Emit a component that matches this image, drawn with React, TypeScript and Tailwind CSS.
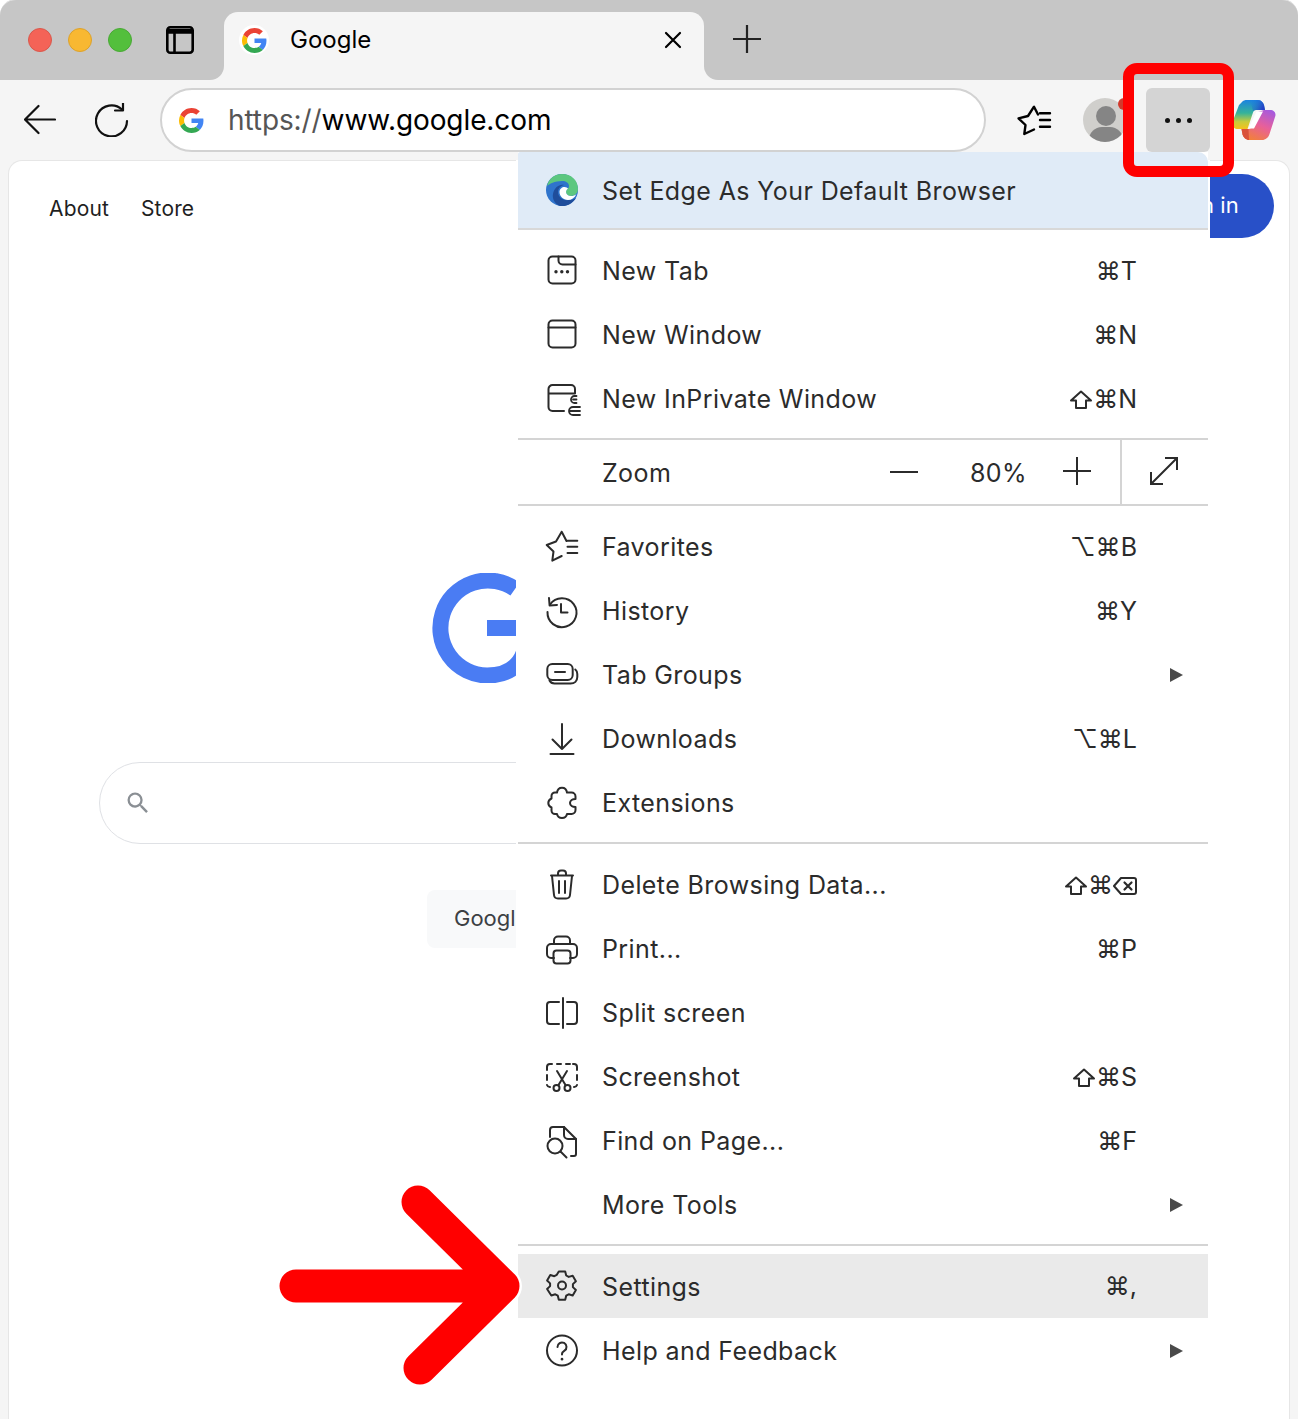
import React from "react";

const GoogleG = ({ className }: { className?: string }) => (
  <svg viewBox="0 0 48 48" className={className}>
    <path fill="#EA4335" d="M24 9.5c3.54 0 6.71 1.22 9.21 3.6l6.85-6.85C35.9 2.38 30.47 0 24 0 14.62 0 6.51 5.38 2.56 13.22l7.98 6.19C12.43 13.72 17.74 9.5 24 9.5z" />
    <path fill="#4285F4" d="M46.98 24.55c0-1.57-.15-3.09-.38-4.55H24v9.02h12.94c-.58 2.96-2.26 5.48-4.78 7.18l7.73 6c4.51-4.18 7.09-10.36 7.09-17.65z" />
    <path fill="#FBBC05" d="M10.53 28.59c-.48-1.45-.76-2.99-.76-4.59s.27-3.14.76-4.59l-7.98-6.19C.92 16.46 0 20.12 0 24c0 3.88.92 7.54 2.56 10.78l7.97-6.19z" />
    <path fill="#34A853" d="M24 48c6.48 0 11.93-2.13 15.89-5.81l-7.73-6c-2.15 1.45-4.92 2.3-8.16 2.3-6.26 0-11.57-4.22-13.47-9.91l-7.98 6.19C6.51 42.62 14.62 48 24 48z" />
  </svg>
);

const I = ({ children, sw = 2 }: { children: React.ReactNode; sw?: number }) => (
  <svg viewBox="0 0 32 32" fill="none" stroke="#2b2b2b" strokeWidth={sw} strokeLinecap="round" strokeLinejoin="round" className="w-8 h-8 shrink-0 overflow-visible">
    {children}
  </svg>
);

const icons: Record<string, React.ReactNode> = {
  newTab: (
    <I>
      <rect x="2.500" y="1.500" width="27" height="27" rx="4" />
      <path d="M12.500 1.500v4a4 4 0 0 0 4 4h13" />
      <circle cx="10" cy="16.800" r="1.700" fill="#2b2b2b" stroke="none" />
      <circle cx="15.800" cy="16.800" r="1.700" fill="#2b2b2b" stroke="none" />
      <circle cx="21.500" cy="16.800" r="1.700" fill="#2b2b2b" stroke="none" />
    </I>
  ),
  newWin: (
    <I>
      <rect x="2.500" y="1.500" width="27" height="27" rx="4" />
      <path d="M2.500 8.500h27" />
    </I>
  ),
  inPrivate: (
    <I>
      <path d="M18 28H6.500a4 4 0 0 1-4-4V6a4 4 0 0 1 4-4H25a4 4 0 0 1 4 4v4.500H2.500" />
      <path d="M30.500 13h-2a3.500 3.500 0 0 0 0 7h2M27 16.500h3.500M34 24h-7a4 4 0 0 0 0 8h7M24 28h10" strokeWidth="1.800" />
    </I>
  ),
  favorites: (
    <I>
      <path d="M20.500 10L15.700.7 10 10.500.7 14l6.800 6.500-1.200 9.200 9.400-4.700" />
      <path d="M21.500 9.700h9.800M21.500 15.700h9.800M21.500 22h9.800" />
    </I>
  ),
  history: (
    <I>
      <path d="M4 9.500A14.500 14.500 0 1 1 1.500 17" />
      <path d="M3 3l.6 7.500 7.400-.6" />
      <path d="M15 9v8.500h6.500" />
    </I>
  ),
  tabGroups: (
    <I>
      <rect x="1.300" y="5" width="25.400" height="16" rx="5" />
      <path d="M9 13h10" />
      <path d="M3.500 21.500c1 2 2.500 3 5 3h16c4 0 6.800-2.500 6.800-6.500v-3c0-2-.8-3.500-2-4.500" />
    </I>
  ),
  download: (
    <I>
      <path d="M16 1v25M6.500 16.500L16 26l9.500-9.500M4.500 31h23" />
    </I>
  ),
  extensions: (
    <I>
      <path d="M11 5.500C11.500 2 13.500 .7 16 .7S20.500 2 21 5.500H25.500A4 4 0 0 1 29.500 9.500V12C26.500 12 24 13.500 24 16S26.500 20 29.500 20V23A4 4 0 0 1 25.500 27H21C20.500 29.500 18.500 31 16 31S11.500 29.500 11 27H9A3.500 3.500 0 0 1 5.500 23.500V20.500C3.300 19.500 2.300 17.500 2.300 16S3.300 12.500 5.500 11.500V9A3.500 3.500 0 0 1 9 5.500Z" />
    </I>
  ),
  trash: (
    <I>
      <path d="M5 6.500h22M12 6V4.500a3 3 0 0 1 3-3h2a3 3 0 0 1 3 3V6" />
      <path d="M6 7l2 19a4 4 0 0 0 4 3.500h8a4 4 0 0 0 4-3.500l2-19" />
      <path d="M13 12v12M19 12v12" />
    </I>
  ),
  print: (
    <I>
      <path d="M8 11V7.500a4 4 0 0 1 4-4h8a4 4 0 0 1 4 4V11" />
      <path d="M8 25H5a4 4 0 0 1-4-4v-6a4 4 0 0 1 4-4h22a4 4 0 0 1 4 4v6a4 4 0 0 1-4 4h-3" />
      <rect x="7.500" y="17.500" width="17" height="13" rx="3" />
    </I>
  ),
  split: (
    <I>
      <path d="M13 5H4a3 3 0 0 0-3 3v16a3 3 0 0 0 3 3h9M17 1v30" />
      <path d="M21 5h7a3 3 0 0 1 3 3v16a3 3 0 0 1-3 3h-7" />
    </I>
  ),
  screenshot: (
    <I>
      <path d="M1 9V6a3 3 0 0 1 3-3h2M11 3h4M20 3h4M27 3h1a3 3 0 0 1 3 3v3M31 14v5M31 24a3 3 0 0 1-3 2M1 14v5M1 24a3 3 0 0 0 3 2" />
      <path d="M11 10l8.500 14M21 10l-8.500 14" />
      <circle cx="10.500" cy="27" r="3" />
      <circle cx="21.500" cy="27" r="3" />
    </I>
  ),
  find: (
    <I>
      <path d="M4 12V5a3 3 0 0 1 3-3h11l12 12v15a2 2 0 0 1-2 2h-3" />
      <path d="M18 2v8a4 4 0 0 0 4 4h8" />
      <circle cx="9" cy="21" r="7.500" />
      <path d="M14.500 26.500l6 6" />
    </I>
  ),
  settings: (
    <I>
      <path d="M12.800 1.500h6.400l1 4 2.500 1.400 4-1.200 3.200 5.500-3 2.900v3l3 2.900-3.200 5.500-4-1.200-2.500 1.400-1 4h-6.400l-1-4-2.500-1.400-4 1.200L1.100 19l3-2.900v-2.700l-3-2.900 3.200-5.500 4 1.200 2.500-1.400z" />
      <circle cx="16" cy="15.500" r="4" />
    </I>
  ),
  help: (
    <I>
      <circle cx="16" cy="15.500" r="15" />
      <path d="M11.500 12a4.500 4.500 0 1 1 7 3.700c-1.500 1-2.500 1.800-2.500 3.300v.5" />
      <path d="M16 24v.2" strokeWidth="2.600" />
    </I>
  ),
};

const Shift = () => (
  <svg viewBox="0 0 24 20" className="w-[24px] h-[20px] shrink-0" fill="none" stroke="#2b2b2b" strokeWidth="2" strokeLinejoin="round">
    <path d="M12 1.500L22 10.500H17V18H7V10.500H2z" />
  </svg>
);
const Bksp = () => (
  <svg viewBox="0 0 24 20" className="w-[24px] h-[20px] shrink-0" fill="none" stroke="#2b2b2b" strokeWidth="2" strokeLinejoin="round" strokeLinecap="round">
    <path d="M8 2h13a2 2 0 0 1 2 2v12a2 2 0 0 1-2 2H8l-7-8z" />
    <path d="M11.500 6.500l7 7M18.500 6.500l-7 7" strokeWidth="2.200" />
  </svg>
);

const Row = ({ icon, label, shortcut, shift, bksp, arrow, active }: { icon?: string; label: string; shortcut?: string; shift?: boolean; bksp?: boolean; arrow?: boolean; active?: boolean }) => (
  <div className={`h-16 flex items-center pl-[28px] shrink-0 ${active ? "bg-[#eaeaea]" : ""}`}>
    <div className="w-8 h-8 shrink-0">{icon ? icons[icon] : null}</div>
    <span className={`ml-[24px] tracking-[0.4px] text-[25px] text-[#2b2b2b] ${active ? "mt-[4px]" : "mt-[2px]"}`}>{label}</span>
    {(shortcut || bksp) && (
      <span className="ml-auto mr-[71px] flex items-center text-[25px] text-[#2b2b2b] mt-[1px]">
        {shift && <Shift />}
        <span>{shortcut}</span>
        {bksp && <Bksp />}
      </span>
    )}
    {arrow && <span className="ml-auto mr-[25px] w-0 h-0 border-y-[7.5px] border-y-transparent border-l-[13px] border-l-[#4a4a4a]" />}
  </div>
);

const Sep = ({ className = "" }: { className?: string }) => <div className={`h-[2px] shrink-0 bg-[#d4d4d4] ${className}`} />;

export default function App() {
  return (
    <div className="relative w-[1298px] h-[1420px] overflow-hidden bg-white font-['Inter','Noto_Sans',sans-serif]">
      <div className="w-full h-full bg-[#f5f5f5] rounded-t-[16px] overflow-hidden border-t border-[#d8d8d8] flex flex-col -mt-px">
        {/* tab strip */}
        <div className="h-[80px] flex shrink-0 bg-[#f5f5f5]">
          <div className="w-[224px] bg-[#c6c6c6] rounded-br-[14px] flex items-center pl-[28px]">
            <span className="w-6 h-6 rounded-full bg-[#f46357] border border-[#d9584c]" />
            <span className="ml-4 w-6 h-6 rounded-full bg-[#f8b832] border border-[#dca22c]" />
            <span className="ml-4 w-6 h-6 rounded-full bg-[#53bf3c] border border-[#49a935]" />
            <svg viewBox="0 0 28 28" className="ml-[34px] w-[28px] h-[28px]" fill="none" stroke="#000" strokeWidth="2.600">
              <rect x="1.300" y="1.300" width="25.400" height="25.400" rx="3" />
              <path d="M1.300 6.500h25.400M8.500 7v19" />
              <path d="M2 3h24v3.500H2z" fill="#000" stroke="none" />
            </svg>
          </div>
          <div className="bg-[#c6c6c6] pt-3 w-[480px]">
            <div className="h-[68px] bg-[#f5f5f5] rounded-t-[14px] flex items-center pl-[15px] pr-[21px] pb-3">
              <span className="w-[30px] h-[30px] rounded-full bg-white flex items-center justify-center">
                <GoogleG className="w-[25px] h-[25px]" />
              </span>
              <span className="ml-[21px] text-[24px] text-black">Google</span>
              <svg viewBox="0 0 20 20" className="ml-auto w-5 h-5" fill="none" stroke="#000" strokeWidth="2.200" strokeLinecap="round">
                <path d="M3 3l14 14M17 3L3 17" />
              </svg>
            </div>
          </div>
          <div className="flex-1 bg-[#c6c6c6] rounded-bl-[14px] flex items-center pl-[29px]">
            <svg viewBox="0 0 28 28" className="w-7 h-7 -mt-[2px]" fill="none" stroke="#222" strokeWidth="2.200">
              <path d="M14 0v28M0 14h28" />
            </svg>
          </div>
        </div>

        {/* toolbar */}
        <div className="h-[80px] shrink-0 flex items-center pl-[24px]">
          <svg viewBox="0 0 32 32" className="w-8 h-8" fill="none" stroke="#111" strokeWidth="2.200" strokeLinecap="round" strokeLinejoin="round">
            <path d="M1 15.500h30M14.500 2L1 15.500 14.500 29" />
          </svg>
          <svg viewBox="0 0 34 34" className="ml-[39px] w-[34px] h-[34px]" fill="none" stroke="#111" strokeWidth="2.200" strokeLinecap="round" strokeLinejoin="round">
            <path d="M27 6.500A15.500 15.500 0 1 0 32 18" />
            <path d="M28 0v7.500h-8" />
          </svg>
          <div className="ml-[31px] w-[826px] h-[64px] rounded-full border-2 border-[#d2d2d2] bg-white flex items-center pl-[17px] text-[28px] tracking-[-0.1px]">
            <GoogleG className="w-[25px] h-[25px]" />
            <span className="ml-[24px] text-[#555]">https://</span>
            <span className="text-black">www.google.com</span>
          </div>
          <svg viewBox="0 0 32 32" className="ml-[32px] w-8 h-8 overflow-visible" fill="none" stroke="#000" strokeWidth="2.400" strokeLinecap="round" strokeLinejoin="round">
            <path d="M20 10.500L16 2.700 10 12 .5 14.300 7.500 21 6.300 30 16 25.500" />
            <path d="M22 9.300h10M22 16h10M22 22.700h10" />
          </svg>
          <div className="relative ml-[33px] w-[44px] h-[44px] rounded-full bg-[#d0cfcc] overflow-hidden shrink-0">
            <span className="absolute left-[13px] top-[8px] w-[20px] h-[20px] rounded-full bg-[#858585]" />
            <span className="absolute left-[6px] top-[29px] w-[34px] h-[26px] rounded-full bg-[#858585]" />
          </div>
          <div className="ml-[19px] w-[64px] h-[64px] rounded-[6px] bg-[#d4d4d4] flex items-center justify-center gap-[6px] shrink-0">
            <span className="w-[5px] h-[5px] rounded-full bg-[#111]" />
            <span className="w-[5px] h-[5px] rounded-full bg-[#111]" />
            <span className="w-[5px] h-[5px] rounded-full bg-[#111]" />
          </div>
          <svg viewBox="0 0 44 42" className="ml-[22px] w-[44px] h-[42px] shrink-0 -mt-[1px]">
            <defs>
              <linearGradient id="cpa" x1="0" y1="0" x2="0" y2="1">
                <stop offset="0" stopColor="#1b82e0" />
                <stop offset="0.450" stopColor="#35b39a" />
                <stop offset="0.750" stopColor="#c8cc3a" />
                <stop offset="1" stopColor="#f5c21c" />
              </linearGradient>
              <linearGradient id="cpd" x1="0" y1="0" x2="1" y2="0.400">
                <stop offset="0" stopColor="#1b82e0" stopOpacity="0" />
                <stop offset="1" stopColor="#2440c8" />
              </linearGradient>
              <linearGradient id="cpb" x1="0.800" y1="0" x2="0.300" y2="1">
                <stop offset="0" stopColor="#a65ade" />
                <stop offset="0.500" stopColor="#e8609a" />
                <stop offset="1" stopColor="#f2803a" />
              </linearGradient>
            </defs>
            <path d="M10 3C11 1.500 13 1 15 1H26C29 1 31 3 32 6L33 11H24C22.500 11 21.500 12 21 13.500L15.500 30H6C2 30-.5 27 .5 23L7 6Z" fill="url(#cpa)" />
            <path d="M18 1H26C29 1 31 3 32 6L33 11H24C23 11 22 11.500 21 12Z" fill="url(#cpd)" />
            <path d="M32 11H38C42.500 11 44.500 14.500 43 18L37.500 35C36.500 38.500 33.500 41 30 41H18C14 41 11.500 38.500 10.500 35.500L9.500 30H16.500C18 30 19.500 29 20 27.500L26 13Z" fill="url(#cpb)" />
            <path d="M10.500 35.500L9.500 30H16.500L17 41C14 41 11.500 38.500 10.500 35.500Z" fill="#d9513a" />
            <path d="M24.500 12.500H31L22 29.500H16.500Z" fill="#fff" />
          </svg>
        </div>

        {/* page */}
        <div className="mx-2 flex-1 bg-white rounded-t-[14px] border-t border-x border-[#e6e6e6] relative flex flex-col items-center">
          <div className="self-stretch flex items-center h-[64px] mt-[13px] pl-[40px] pr-[15px] text-[21px] tracking-[0.15px] text-[#1f1f1f]">
            <span className="mt-[6px]">About</span>
            <span className="ml-[32px] mt-[6px]">Store</span>
            <span className="ml-auto h-[64px] w-[200px] rounded-full bg-[#2850c8] text-white flex items-center justify-end pr-[35px] pb-[2px] text-[22px]">Sign in</span>
          </div>
          <svg viewBox="0 0 434 110" className="mt-[335px] w-[434px] h-[110px] shrink-0">
            <path d="M83 16A47.500 47.500 0 1 0 55 102.500c26 0 40-15 40-42.500v-5H55" fill="none" stroke="#4a7cf3" strokeWidth="16" />
          </svg>
          <div className="mt-[79px] w-[1100px] h-[82px] rounded-full border border-[#dfe1e5] flex items-center pl-[24px] shrink-0">
            <svg viewBox="0 0 24 24" className="w-[28px] h-[28px]" fill="#8a8f94">
              <path d="M15.500 14h-.79l-.28-.27A6.470 6.470 0 0 0 16 9.500 6.500 6.500 0 1 0 9.500 16c1.610 0 3.090-.59 4.230-1.570l.27.28v.79l5 4.990L20.490 19l-4.990-5zm-6 0C7.010 14 5 11.990 5 9.500S7.010 5 9.500 5 14 7.010 14 9.500 11.990 14 9.500 14z" />
            </svg>
          </div>
          <div className="mt-[46px] flex gap-4 shrink-0 text-[22px] text-[#3c4043]">
            <div className="w-[214px] h-[58px] rounded-[8px] bg-[#f8f9fa] flex items-center pl-[27px] pb-[2px] whitespace-nowrap">Google Search</div>
            <div className="w-[214px] h-[58px] rounded-[8px] bg-[#f8f9fa] flex items-center justify-center whitespace-nowrap">I'm Feeling Lucky</div>
          </div>
        </div>
      </div>

      {/* menu */}
      <div className="absolute left-[518px] top-[152px] w-[690px] h-[1268px] bg-white flex flex-col">
        <span className="absolute -left-[2px] top-[8px] bottom-0 w-[2px] bg-white" />
        <span className="absolute -right-[2px] top-[8px] bottom-0 w-[2px] bg-white" />
        <div className="h-[78px] shrink-0 bg-[#e0ebf7] rounded-tr-[10px] rounded-tl-[2px] border-b-2 border-[#d8d8d8] flex items-center pl-[28px]">
          <svg viewBox="0 0 32 32" className="w-8 h-8 shrink-0">
            <circle cx="16" cy="16" r="16" fill="#2f74cc" />
            <path d="M1 12C3 4 9 0 16 0c9 0 16 6 16 15 0 4-3 7-7 7-3 0-5-2-5-4 0-3 3-3 3-6 0-3-3-5-7-5-7 0-13 3-15 5z" fill="#5cc77f" />
            <path d="M14 32c-5-2-8-7-7-12 1-6 6-10 11-9-4 1-6 4-6 7 0 5 5 9 11 8 3 0 5-1 7-2-3 5-9 9-16 8z" fill="#1f4d9b" />
            <path d="M13.500 18c0-3 2.500-5 5-5 1.500 0 3 .8 3.500 1.500-1 1-2 2-2 3.500 0 2 2 4 5 4 2 0 4-.6 5.500-2-2 4-5 6-8.500 6-5 0-8.500-4-8.500-8z" fill="#fff" />
          </svg>
          <span className="ml-[24px] mt-[4px] tracking-[0.4px] text-[25px] text-[#2b2b2b]">Set Edge As Your Default Browser</span>
        </div>
        <div className="h-[9px] shrink-0" />
        <Row icon="newTab" label="New Tab" shortcut="⌘T" />
        <Row icon="newWin" label="New Window" shortcut="⌘N" />
        <Row icon="inPrivate" label="New InPrivate Window" shift shortcut="⌘N" />
        <Sep className="mt-[7px]" />
        <div className="h-[64px] shrink-0 flex items-center pl-[84px] text-[25px] tracking-[0.4px] text-[#2b2b2b]">
          <span className="w-[70px] mt-[4px]">Zoom</span>
          <span className="ml-[218px] w-[28px] h-[2px] bg-[#2b2b2b]" />
          <span className="ml-[52px] w-[56px] mt-[4px]">80%</span>
          <svg viewBox="0 0 28 28" className="ml-[37px] w-7 h-7 -mt-[2px]" fill="none" stroke="#2b2b2b" strokeWidth="2">
            <path d="M14 0v28M0 14h28" />
          </svg>
          <span className="ml-[29px] w-[2px] h-[64px] bg-[#d4d4d4]" />
          <svg viewBox="0 0 28 28" className="ml-[28px] w-7 h-7 -mt-[2px]" fill="none" stroke="#2b2b2b" strokeWidth="2">
            <path d="M1 27L27 1M15 1h12v12M1 15v12h12" />
          </svg>
        </div>
        <Sep />
        <div className="h-[9px] shrink-0" />
        <Row icon="favorites" label="Favorites" shortcut="⌥⌘B" />
        <Row icon="history" label="History" shortcut="⌘Y" />
        <Row icon="tabGroups" label="Tab Groups" arrow />
        <Row icon="download" label="Downloads" shortcut="⌥⌘L" />
        <Row icon="extensions" label="Extensions" />
        <Sep className="mt-[7px]" />
        <div className="h-[9px] shrink-0" />
        <Row icon="trash" label="Delete Browsing Data..." shift shortcut="⌘" bksp />
        <Row icon="print" label="Print..." shortcut="⌘P" />
        <Row icon="split" label="Split screen" />
        <Row icon="screenshot" label="Screenshot" shift shortcut="⌘S" />
        <Row icon="find" label="Find on Page..." shortcut="⌘F" />
        <Row label="More Tools" arrow />
        <Sep className="mt-[7px]" />
        <div className="h-[8px] shrink-0" />
        <Row icon="settings" label="Settings" shortcut="⌘," active />
        <div className="h-px shrink-0" />
        <Row icon="help" label="Help and Feedback" arrow />
      </div>

      {/* avatar notification dot */}
      <span className="absolute left-[1118px] top-[98px] w-[12px] h-[12px] rounded-full bg-[#d13a2c]" />
      {/* red highlight box */}
      <div className="absolute left-[1123px] top-[63px] w-[111px] h-[114px] border-[11px] border-[#ff0000] rounded-[14px]" />
      {/* red arrow */}
      <svg className="absolute left-[260px] top-[1170px] w-[280px] h-[230px]" viewBox="0 0 280 230" fill="none" strokeLinecap="round" strokeLinejoin="round">
        <path d="M158 32L243 116 160 198" stroke="#fff" strokeWidth="38" />
        <path d="M36 116H243M158 32L243 116 160 198" stroke="#ff0000" strokeWidth="33" />
      </svg>
    </div>
  );
}
